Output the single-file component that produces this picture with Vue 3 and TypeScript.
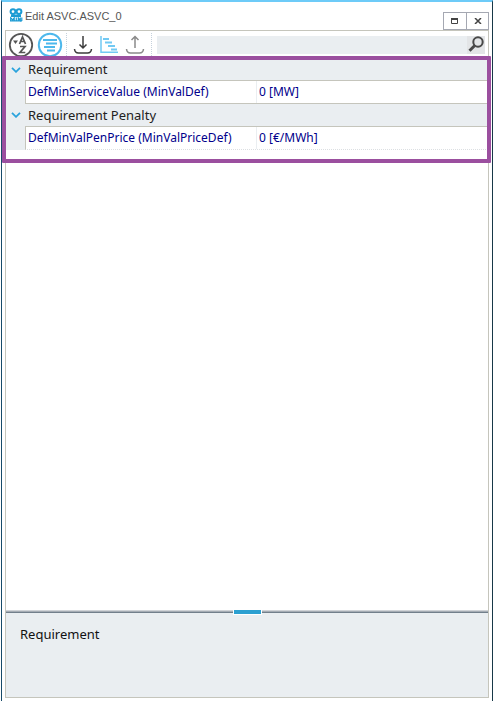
<script setup lang="ts">
import { ref } from 'vue'

interface Property {
  id: string
  label: string
  value: string
}
interface Category {
  title: string
  items: Property[]
}

const query = ref('')
const categories = ref<Category[]>([
  {
    title: 'Requirement',
    items: [{ id: 'min-value', label: 'DefMinServiceValue (MinValDef)', value: '0 [MW]' }],
  },
  {
    title: 'Requirement Penalty',
    items: [{ id: 'min-price', label: 'DefMinValPenPrice (MinValPriceDef)', value: '0 [€/MWh]' }],
  },
])
</script>

<template>
  <div class="window">
    <header class="titlebar">
      <svg class="logo" width="14" height="14" viewBox="0 0 14 14" aria-hidden="true">
        <g fill="none" stroke="#1c9bd3" stroke-width="2">
          <circle cx="4" cy="3.6" r="2.4" />
          <circle cx="10" cy="3.6" r="2.4" />
        </g>
        <path d="M2 6.500h10v2.500H2z" fill="#1c9bd3" />
        <path d="M1.700 13V9.800l2 2 1.500-2V13M7.300 9.500V13M9.300 13v-3.200l2 2.700V9.500M12.800 9.500V13M1 12.800h12" fill="none" stroke="#1c9bd3" stroke-width="1.200" />
      </svg>
      <h1 class="title">Edit ASVC.ASVC_0</h1>
      <div class="controls">
        <button type="button" class="control" aria-label="Maximize">
          <svg width="8" height="6" viewBox="0 0 8 6"><path d="M.5 1v4.500h6V1" fill="none" stroke="#444" /><path d="M0 0h7v2H0z" fill="#444" /></svg>
        </button>
        <button type="button" class="control" aria-label="Close">
          <svg width="8" height="6" viewBox="0 0 8 6"><path d="M1 0l6 6M7 0L1 6" fill="none" stroke="#444" stroke-width="1.500" /></svg>
        </button>
      </div>
    </header>

    <main class="panel">
      <div class="toolbar">
        <button type="button" class="tool" aria-label="Sort alphabetically">
          <svg width="26" height="26" viewBox="0 0 26 26" fill="none" stroke="#555">
            <circle cx="13" cy="13" r="11.200" stroke-width="1.800" />
            <path d="M5 8.500h5L7.500 12z" fill="#555" stroke="none" />
            <path d="M11.500 12L14.500 5l3 7M12.500 9.500h4M12 14.500h5l-5 6h5.300" stroke-width="1.700" />
          </svg>
        </button>
        <button type="button" class="tool categorized" aria-label="Categorized">
          <svg width="26" height="26" viewBox="0 0 26 26" fill="none" stroke="#4db8ec">
            <circle cx="13" cy="13" r="11.200" stroke-width="2" />
            <path d="M6 8h14M9 11.500h11M7 15h11M10 18.500h8" stroke-width="2" />
          </svg>
        </button>
        <span class="separator"></span>
        <button type="button" class="tool" aria-label="Import">
          <svg width="20" height="20" viewBox="0 0 20 20" fill="none" stroke="#3c3c3c" stroke-width="1.500">
            <path d="M10 1v12M6.500 9.500L10 13l3.500-3.500" />
            <path d="M1.500 14c.3 3 1.800 4 4 4h9c2.200 0 3.700-1 4-4" />
          </svg>
        </button>
        <button type="button" class="tool" aria-label="Hierarchy">
          <svg width="20" height="20" viewBox="0 0 20 20" fill="none" stroke="#72c9f3">
            <path d="M2 1v16.200h17" stroke-width="1.500" />
            <path d="M4 4h6M6 7.500h7M9 11h7M12 14.500h6" stroke-width="2" />
          </svg>
        </button>
        <button type="button" class="tool" aria-label="Export">
          <svg width="20" height="20" viewBox="0 0 20 20" fill="none" stroke="#8a8a8a" stroke-width="1.500">
            <path d="M10 13V1.500M6.500 5L10 1.500 13.500 5" />
            <path d="M1.500 14c.3 3 1.800 4 4 4h9c2.200 0 3.700-1 4-4" />
          </svg>
        </button>
        <span class="separator"></span>
        <div class="search">
          <input v-model="query" type="text" aria-label="Search properties" />
          <button type="button" class="search-button" aria-label="Search">
            <svg width="17" height="17" viewBox="0 0 17 17" fill="none" stroke="#484848">
              <circle cx="10" cy="6" r="4.700" stroke-width="2" />
              <path d="M6.500 9.800L1.500 14.800" stroke-width="3" />
            </svg>
          </button>
        </div>
      </div>

      <section class="properties">
        <div v-for="category in categories" :key="category.title" class="category">
          <h2 class="category-title">
            <svg width="10" height="6" viewBox="0 0 10 6" aria-hidden="true"><path d="M1 .8l4 4 4-4" fill="none" stroke="#2ba3dc" stroke-width="1.800" /></svg>
            <span>{{ category.title }}</span>
          </h2>
          <div v-for="item in category.items" :key="item.id" class="property">
            <label :for="item.id">{{ item.label }}</label>
            <input :id="item.id" v-model="item.value" type="text" />
          </div>
        </div>
        <div class="highlight"></div>
      </section>

      <div class="splitter"><span class="grip"></span></div>
      <section class="description">Requirement</section>
    </main>
  </div>
</template>

<style>
body {
  background: #fff;
}
</style>

<style scoped>
* {
  box-sizing: border-box;
}
.window {
  display: flex;
  flex-direction: column;
  min-height: 100vh;
  margin-left: 1px;
  padding: 0 3px 3px;
  border-top: 2px solid #6dcbf8;
  border-left: 1px solid #174a69;
  border-right: 1px solid #173848;
  background: #fff;
  font-family: "Noto Sans", "Open Sans", sans-serif;
}
button {
  display: flex;
  align-items: center;
  justify-content: center;
  padding: 0;
  border: 0;
  background: none;
}
input {
  min-width: 0;
  padding: 0;
  border: 0;
  outline: 0;
  background: none;
  font: inherit;
  color: inherit;
}
.titlebar {
  display: flex;
  height: 28px;
  padding-left: 4px;
}
.logo {
  flex: none;
  margin-top: 6px;
}
.title {
  flex: 1;
  margin: 6px 0 0 2px;
  font: 11px/16px "Liberation Sans", Arial, sans-serif;
  color: #555;
}
.controls {
  display: flex;
  height: 18px;
  margin-top: 10px;
}
.control {
  width: 24px;
  border: 1px solid #a5a8b2;
}
.control + .control {
  width: 23px;
  margin-left: -1px;
}
.panel {
  flex: 1;
  display: flex;
  flex-direction: column;
  border: 1px solid #c5c5bc;
}
.toolbar {
  display: flex;
  align-items: center;
  height: 27px;
  padding: 0 3px 0 2px;
}
.tool {
  flex: none;
  width: 26px;
  height: 26px;
}
.categorized {
  margin-left: 3px;
}
.separator {
  align-self: stretch;
  margin: 2px 3px;
  border-left: 1px dotted #c5d1dc;
}
.search {
  flex: 1;
  display: flex;
  height: 18px;
  margin-left: 2px;
  background: #eaeef1;
}
.search input {
  flex: 1;
  padding: 0 4px;
  font-size: 12px;
}
.search-button {
  width: 18px;
  background: #e3e5e7;
}
.properties {
  position: relative;
  padding: 2px 0 12px;
}
.category {
  background: #eaeef1;
}
.category-title {
  display: flex;
  align-items: center;
  gap: 7px;
  height: 20px;
  margin: 0;
  padding-left: 5px;
  font-size: 13px;
  line-height: 18px;
  font-weight: 400;
  color: #222;
}
.category:first-child .category-title span {
  padding-bottom: 2px;
}
.category + .category .category-title {
  height: 22px;
}
.property {
  display: grid;
  grid-template-columns: 231px 1fr;
  height: 24px;
  margin-left: 19px;
  border: solid #c5c5bc;
  border-width: 1px 0 1px 1px;
  background: #fff;
  font-size: 12px;
  line-height: 22px;
  color: #00008b;
}
.category + .category .property {
  border-bottom: 1px dotted #dcdfe2;
}
.property label {
  padding-left: 2px;
  border-right: 1px solid #eaeef1;
  white-space: nowrap;
}
.property input {
  padding-left: 2px;
}
.highlight {
  position: absolute;
  inset: -2px -3px -1px -4px;
  border: 4px solid #9b4f9f;
  border-radius: 1px;
  pointer-events: none;
}
.splitter {
  display: flex;
  justify-content: center;
  height: 3px;
  margin-top: auto;
  border-top: 1px solid #d0d3d7;
  border-bottom: 1px solid #727f8b;
  background: #a5acb4;
}
.grip {
  flex: none;
  width: 29px;
  height: 6px;
  margin-top: -2px;
  border: 1px solid #fff;
  background: #2ca0d1;
  z-index: 1;
}
.description {
  height: 84px;
  padding: 11px 14px;
  background: #eaeef1;
  font-size: 13px;
  line-height: 20px;
  color: #111;
}
</style>
